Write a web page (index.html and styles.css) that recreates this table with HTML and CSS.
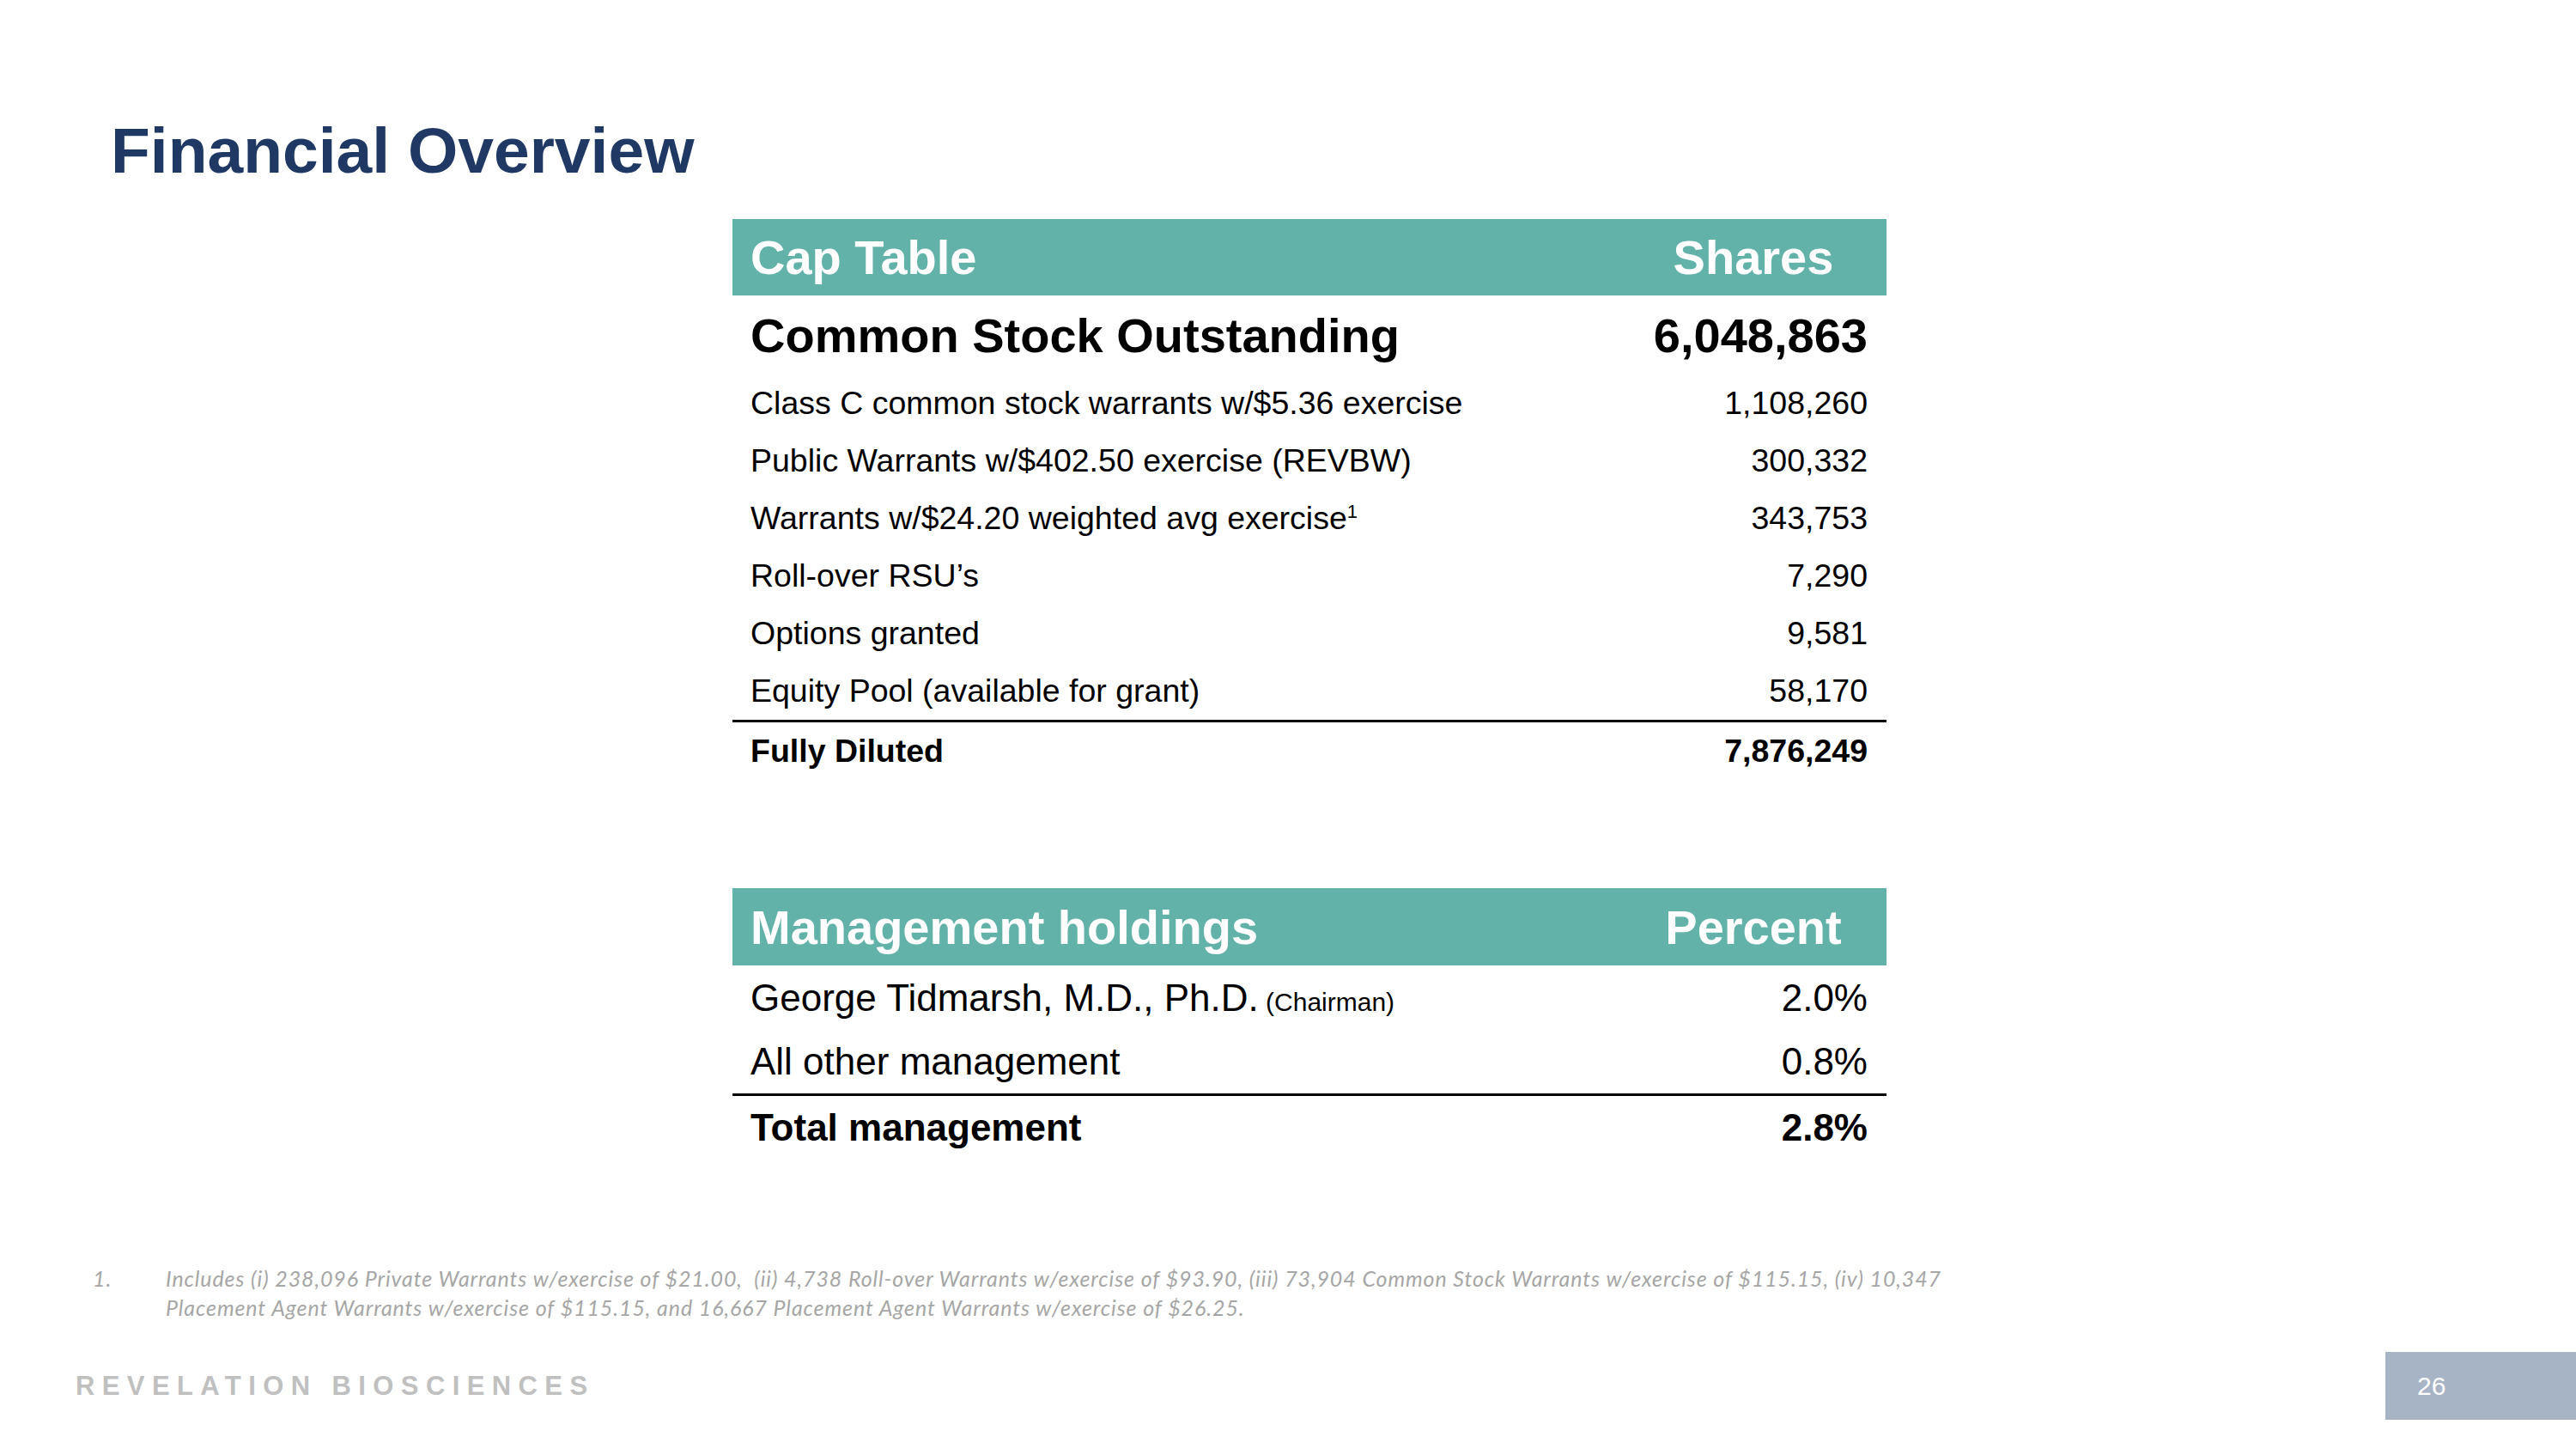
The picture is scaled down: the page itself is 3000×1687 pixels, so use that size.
FILE: index.html
```html
<!DOCTYPE html>
<html lang="en">
<head>
<meta charset="utf-8">
<title>Financial Overview</title>
<link rel="stylesheet" href="styles.css">
</head>
<body>
<div class="slide">
  <h1 class="title">Financial Overview</h1>

  <div class="tables">
    <section class="tbl cap">
      <div class="row head"><span>Cap Table</span><span class="col">Shares</span></div>
      <div class="row lead"><span>Common Stock Outstanding</span><span class="val">6,048,863</span></div>
      <div class="row item"><span>Class C common stock warrants w/$5.36 exercise</span><span class="val">1,108,260</span></div>
      <div class="row item"><span>Public Warrants w/$402.50 exercise (REVBW)</span><span class="val">300,332</span></div>
      <div class="row item"><span>Warrants w/$24.20 weighted avg exercise<sup class="fnref">1</sup></span><span class="val">343,753</span></div>
      <div class="row item"><span>Roll-over RSU’s</span><span class="val">7,290</span></div>
      <div class="row item"><span>Options granted</span><span class="val">9,581</span></div>
      <div class="row item"><span>Equity Pool (available for grant)</span><span class="val">58,170</span></div>
      <div class="row total"><span>Fully Diluted</span><span class="val">7,876,249</span></div>
    </section>

    <section class="tbl mgmt">
      <div class="row head"><span>Management holdings</span><span class="col">Percent</span></div>
      <div class="row item first"><span>George Tidmarsh, M.D., Ph.D.<span class="role"> (Chairman)</span></span><span class="val">2.0%</span></div>
      <div class="row item second"><span>All other management</span><span class="val">0.8%</span></div>
      <div class="row total"><span>Total management</span><span class="val">2.8%</span></div>
    </section>
  </div>

  <div class="footnote">
    <span class="fn-num">1.</span>
    <p class="fn-text">Includes (i) 238,096 Private Warrants w/exercise of $21.00,&nbsp; (ii) 4,738 Roll-over Warrants w/exercise of $93.90, (iii) 73,904 Common Stock Warrants w/exercise of $115.15, (iv) 10,347<br>Placement Agent Warrants w/exercise of $115.15, and 16,667 Placement Agent Warrants w/exercise of $26.25.</p>
  </div>

  <footer class="footer">
    <span class="brand">REVELATION BIOSCIENCES</span>
    <span class="pageno">26</span>
  </footer>
</div>
</body>
</html>
```

FILE: styles.css
```css
* { box-sizing: border-box; }

html, body {
  margin: 0;
  padding: 0;
  background: #ffffff;
}

body {
  font-family: "Liberation Sans", Arial, sans-serif;
  color: #000000;
}

.slide {
  width: 3000px;
  height: 1687px;
  overflow: hidden;
  padding-top: 138px;
  background: #ffffff;
}

.title {
  margin: 0 0 0 129px;
  font-size: 75px;
  line-height: 75px;
  font-weight: 700;
  color: #1f3864;
}

.tables {
  margin: 42px 0 0 853px;
  width: 1344px;
}

.row {
  display: flex;
  align-items: center;
  justify-content: space-between;
  padding: 0 22px 0 21px;
  white-space: nowrap;
}

.val { text-align: right; }

.head {
  height: 89px;
  padding-right: 0;
  background: #62b2aa;
  color: #ffffff;
  font-size: 56px;
  font-weight: 700;
}

.head .col {
  width: 310px;
  text-align: center;
}

.lead {
  height: 92px;
  font-size: 56px;
  font-weight: 700;
}

.item {
  height: 67px;
  font-size: 37.5px;
}

.fnref {
  font-size: 22px;
  vertical-align: 13px;
  line-height: 0;
}

.total {
  border-top: 3px solid #000000;
  font-weight: 700;
}

.cap .total {
  height: 70px;
  font-size: 37.5px;
}

.mgmt { margin-top: 126px; }

.mgmt .head { height: 90px; }

.mgmt .item { font-size: 44px; }
.mgmt .first { height: 75px; }
.mgmt .second { height: 74px; }

.role { font-size: 30px; }

.mgmt .total {
  height: 77px;
  font-size: 44px;
}

.footnote {
  display: flex;
  margin-top: 121px;
  padding-left: 108px;
  font-family: Lato, "Open Sans", sans-serif;
  font-style: italic;
  font-size: 25px;
  line-height: 34px;
  letter-spacing: 0.9px;
  color: #a6a6a6;
}

.fn-num {
  width: 85px;
  flex: none;
}

.fn-text {
  margin: 0;
  white-space: nowrap;
}

.footer {
  display: flex;
  align-items: center;
  justify-content: space-between;
  margin-top: 35px;
  height: 79px;
}

.brand {
  padding-left: 88px;
  font-size: 31px;
  font-weight: 700;
  letter-spacing: 8.4px;
  color: #c0c0c0;
}

.pageno {
  display: flex;
  align-items: center;
  width: 222px;
  height: 79px;
  padding-left: 37px;
  background: #a7b4c6;
  color: #ffffff;
  font-size: 30px;
}
```
